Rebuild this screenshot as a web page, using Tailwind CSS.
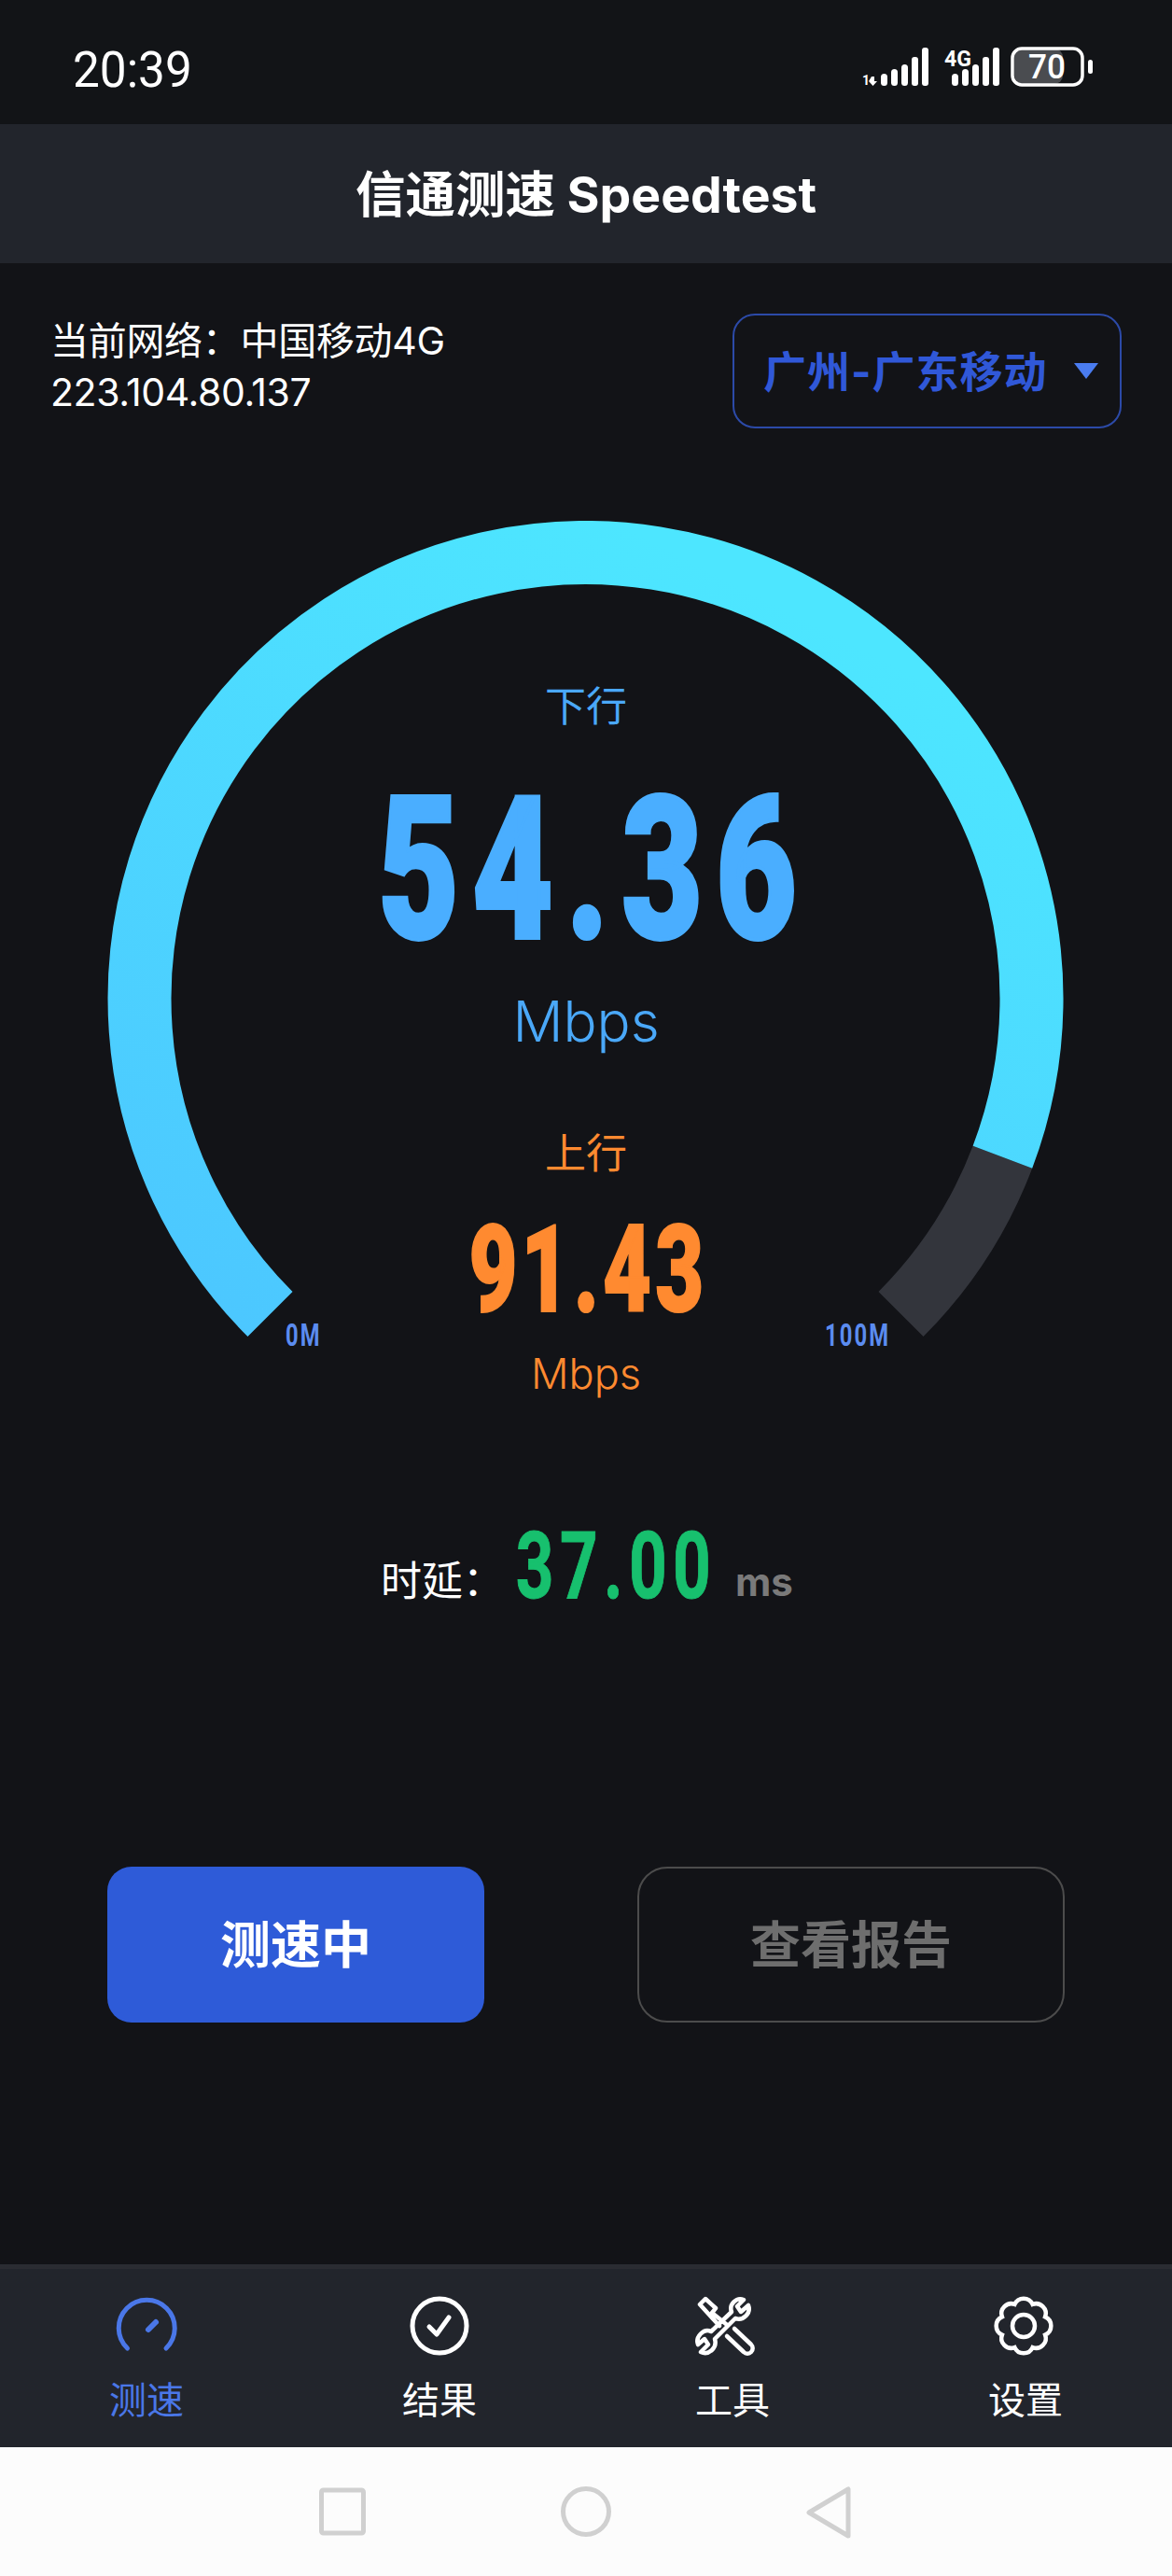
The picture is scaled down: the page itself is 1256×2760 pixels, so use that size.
<!DOCTYPE html>
<html lang="zh-CN">
<head>
  <meta charset="UTF-8" />
  <meta name="viewport" content="width=device-width, initial-scale=1.0"/>
  <title>信通测速 Speedtest</title>
  <script src="https://cdn.jsdelivr.net/npm/@tailwindcss/browser@4"></script>
</head>
<body class="bg-[#121317]">
<div class="w-[1256px] h-[2760px] flex flex-col overflow-hidden bg-[#121317] text-white font-[Inter,'Noto_Sans_CJK_SC',sans-serif]">

  <!-- status bar -->
  <div class="h-[133px] shrink-0 bg-[#121417] flex items-center justify-between pl-[78px] pr-[76px] pt-[16px]">
    <span class="text-[54px] leading-none font-[Roboto,sans-serif] scale-x-[0.95] origin-left">20:39</span>
    <svg class="w-[256px] h-[50px]" viewBox="0 0 256 50" fill="#fff">
      <text x="0" y="41" font-family="Roboto, sans-serif" font-size="14" font-weight="700">1</text>
      <path d="M10 32h3v5h3l-4.500 5-4.500-5h0z"/>
      <rect x="20" y="29" width="7" height="13" rx="3.500"/>
      <rect x="31" y="24" width="7" height="18" rx="3.500"/>
      <rect x="42" y="19" width="7" height="23" rx="3.500"/>
      <rect x="53" y="11" width="7" height="31" rx="3"/>
      <rect x="64" y="1" width="7" height="41" rx="3"/>
      <text x="88" y="21" font-family="Roboto, sans-serif" font-size="24" font-weight="700" textLength="29" lengthAdjust="spacingAndGlyphs">4G</text>
      <rect x="96" y="29" width="7" height="13" rx="3.500"/>
      <rect x="107" y="24" width="7" height="18" rx="3.500"/>
      <rect x="118" y="19" width="7" height="23" rx="3.500"/>
      <rect x="129" y="11" width="7" height="31" rx="3"/>
      <rect x="140" y="1" width="7" height="41" rx="3"/>
      <rect x="163" y="2" width="52" height="38" rx="9" fill="#4a4c50"/>
      <rect x="215" y="2" width="20" height="38" fill="#121417"/>
      <rect x="161" y="2" width="75" height="39" rx="10" fill="none" stroke="#fff" stroke-width="3.500"/>
      <rect x="242" y="14" width="5" height="15" rx="2.500"/>
      <text x="198" y="34" text-anchor="middle" font-family="Roboto, sans-serif" font-size="37" font-weight="500" textLength="40" lengthAdjust="spacingAndGlyphs">70</text>
    </svg>
  </div>

  <!-- header -->
  <div class="h-[149px] shrink-0 bg-[#22252c] flex items-center justify-center text-[53.5px] font-bold pt-[3px]">信通测速 Speedtest</div>

  <!-- network info + server picker -->
  <div class="flex justify-between items-start pt-[54px] pl-[54px] pr-[54px] h-[177px] shrink-0">
    <div class="text-[41px] leading-[55px] pt-[2px]">
      <div class="tracking-[-0.3px]">当前网络：中国移动4G</div>
      <div class="tracking-[-0.4px]">223.104.80.137</div>
    </div>
    <div class="w-[417px] h-[123px] border-2 border-[#2c4aa8] rounded-[24px] flex items-center pl-[31px]">
      <span class="text-[46px] font-bold text-[#3058d8] leading-none tracking-[1px]">广州-广东移动</span>
      <span class="ml-[28px] w-0 h-0 border-x-[13px] border-x-transparent border-t-[17px] border-t-[#4a7cf0]"></span>
    </div>
  </div>

  <!-- gauge -->
  <div class="relative w-[1026px] ml-[115px] mt-[99px] shrink-0 h-[944px] flex flex-col items-center">
    <svg class="absolute left-0 top-0 w-[1026px] h-[944px]" viewBox="0 0 1026 944" fill="none">
      <defs>
        <linearGradient id="arcFill" x1="0" y1="1" x2="0.6" y2="0">
          <stop offset="0" stop-color="#4cc6ff"/>
          <stop offset="1" stop-color="#4de6ff"/>
        </linearGradient>
      </defs>
      <path d="M850.500 850A478 478 0 0 0 959.400 681.700" stroke="#33353c" stroke-width="68"/>
      <path d="M174.500 850A478 478 0 1 1 959.400 681.700" stroke="url(#arcFill)" stroke-width="68"/>
    </svg>
    <div class="relative mt-[169px] h-[60px] leading-[60px] text-[44px] text-[#4aa8f8]">下行</div>
    <div class="relative mt-[41px] h-[200px] leading-[200px] text-[214px] text-[#4aaeff] [-webkit-text-stroke:4px_#4aaeff] font-black font-[Roboto,sans-serif] tracking-[20px] scale-x-[0.7] translate-x-[8px] translate-y-[4px] whitespace-nowrap">54.36</div>
    <div class="relative mt-[26px] h-[80px] leading-[80px] text-[60px] text-[#4aa8f8] font-light">Mbps</div>
    <div class="relative mt-[72px] h-[60px] leading-[60px] text-[44px] text-[#ff8a30]">上行</div>
    <div class="relative mt-[32px] h-[120px] leading-[120px] text-[130px] text-[#ff8a30] [-webkit-text-stroke:2px_#ff8a30] font-black font-[Roboto,sans-serif] tracking-[6px] scale-x-[0.69] translate-x-[2px] translate-y-[3px] whitespace-nowrap">91.43</div>
    <div class="relative mt-[24px] h-[60px] leading-[60px] text-[45px] text-[#ff8a30] font-light">Mbps</div>
    <span class="absolute left-[191px] top-[855px] text-[34px] leading-none font-bold font-[Roboto,sans-serif] text-[#5b8cf0] tracking-[3px] scale-x-[0.7] origin-left">0M</span>
    <span class="absolute left-[769px] top-[855px] text-[34px] leading-none font-bold font-[Roboto,sans-serif] text-[#5b8cf0] tracking-[3px] scale-x-[0.7] origin-left">100M</span>
  </div>

  <!-- latency -->
  <div class="flex items-baseline h-[100px] pl-[408px] mt-[99px] shrink-0">
    <span class="text-[44px] w-[132px] shrink-0 whitespace-nowrap">时延：</span>
    <span class="ml-[17px] w-[207px] flex justify-center text-[100px] text-[#17c06e] [-webkit-text-stroke:1px_#17c06e] font-bold font-[Roboto,sans-serif] tracking-[9px] scale-x-[0.71] translate-y-[2px] whitespace-nowrap">37.00</span>
    <span class="ml-[24px] text-[42px] font-bold text-[#7a7a7a]">ms</span>
  </div>

  <!-- actions -->
  <div class="flex justify-between px-[115px] mt-[299px] shrink-0">
    <button class="w-[404px] h-[167px] rounded-[26px] bg-[#2e5bd8] text-[54px] font-bold pt-[2px]">测速中</button>
    <button class="w-[458px] h-[167px] rounded-[32px] border-2 border-[#4c4c4c] text-[54px] font-bold text-[#6e6e6e] pt-[2px]">查看报告</button>
  </div>
  <div class="flex-1"></div>

  <!-- tab bar -->
  <div class="h-[196px] shrink-0 bg-[#22252c] border-t-[5px] border-[#2a2c32] grid grid-cols-4">
    <div class="flex flex-col items-center">
      <svg class="w-[120px] h-[85px] mt-[19px] translate-x-[2px]" viewBox="0 0 120 85" fill="none" stroke="#4a77e8" stroke-width="5" stroke-linecap="round">
        <path d="M37.500 66A30 30 0 1 1 79 66"/>
        <path d="M60 46L68 38" stroke-width="6"/>
      </svg>
      <span class="text-[40px] leading-[44px] mt-[15px] text-[#4a77e8]">测速</span>
    </div>
    <div class="flex flex-col items-center">
      <svg class="w-[120px] h-[85px] mt-[19px]" viewBox="0 0 120 85" fill="none" stroke="#fff" stroke-width="5" stroke-linecap="round" stroke-linejoin="round">
        <circle cx="60" cy="42" r="29"/>
        <path d="M49 43L57 51L70 33"/>
      </svg>
      <span class="text-[40px] leading-[44px] mt-[15px]">结果</span>
    </div>
    <div class="flex flex-col items-center">
      <svg class="w-[120px] h-[85px] mt-[19px]" viewBox="0 0 120 85" fill="none" stroke="#fff" stroke-width="4.500" stroke-linecap="round" stroke-linejoin="round">
        <path d="M62 45L80 62A5 5 0 0 1 72 70L54 53"/>
        <path d="M53 40L38 28L42 23L31 13L25 19L35 30L46 42"/>
        <path d="M72 14L65 21L69 27L77 20C80 28 72 37 63 34L41 56C44 66 34 74 26 70L34 62L30 56L23 62C20 54 29 44 37 48L59 27C56 19 64 11 72 14Z"/>
      </svg>
      <span class="text-[40px] leading-[44px] mt-[15px]">工具</span>
    </div>
    <div class="flex flex-col items-center">
      <svg class="w-[120px] h-[85px] mt-[19px]" viewBox="0 0 120 85" fill="none" stroke="#fff" stroke-width="4.500">
        <path d="M81.100 32.400A10.500 10.500 0 0 1 81.100 51.600A10.500 10.500 0 0 1 67.600 65.100A10.500 10.500 0 0 1 48.400 65.100A10.500 10.500 0 0 1 34.900 51.600A10.500 10.500 0 0 1 34.900 32.400A10.500 10.500 0 0 1 48.400 18.900A10.500 10.500 0 0 1 67.600 18.900A10.500 10.500 0 0 1 81.100 32.400Z"/>
        <circle cx="58" cy="42" r="12"/>
      </svg>
      <span class="text-[40px] leading-[44px] mt-[15px]">设置</span>
    </div>
  </div>

  <!-- android nav -->
  <div class="h-[138px] shrink-0 bg-[#fcfcfc] flex justify-between pl-[342px] pr-[342px] pt-[42px]">
    <svg class="w-[50px] h-[54px]" viewBox="0 0 50 54" fill="none" stroke="#d0d0d0" stroke-width="5">
      <rect x="2.500" y="4" width="45" height="46" rx="2"/>
    </svg>
    <svg class="w-[56px] h-[54px]" viewBox="0 0 56 54" fill="none" stroke="#d0d0d0" stroke-width="5">
      <circle cx="28" cy="27" r="24.500"/>
    </svg>
    <svg class="w-[50px] h-[56px]" viewBox="0 0 50 56" fill="none" stroke="#d0d0d0" stroke-width="5" stroke-linejoin="round">
      <path d="M45 3V53L3 28Z"/>
    </svg>
  </div>
</div>
</body>
</html>
